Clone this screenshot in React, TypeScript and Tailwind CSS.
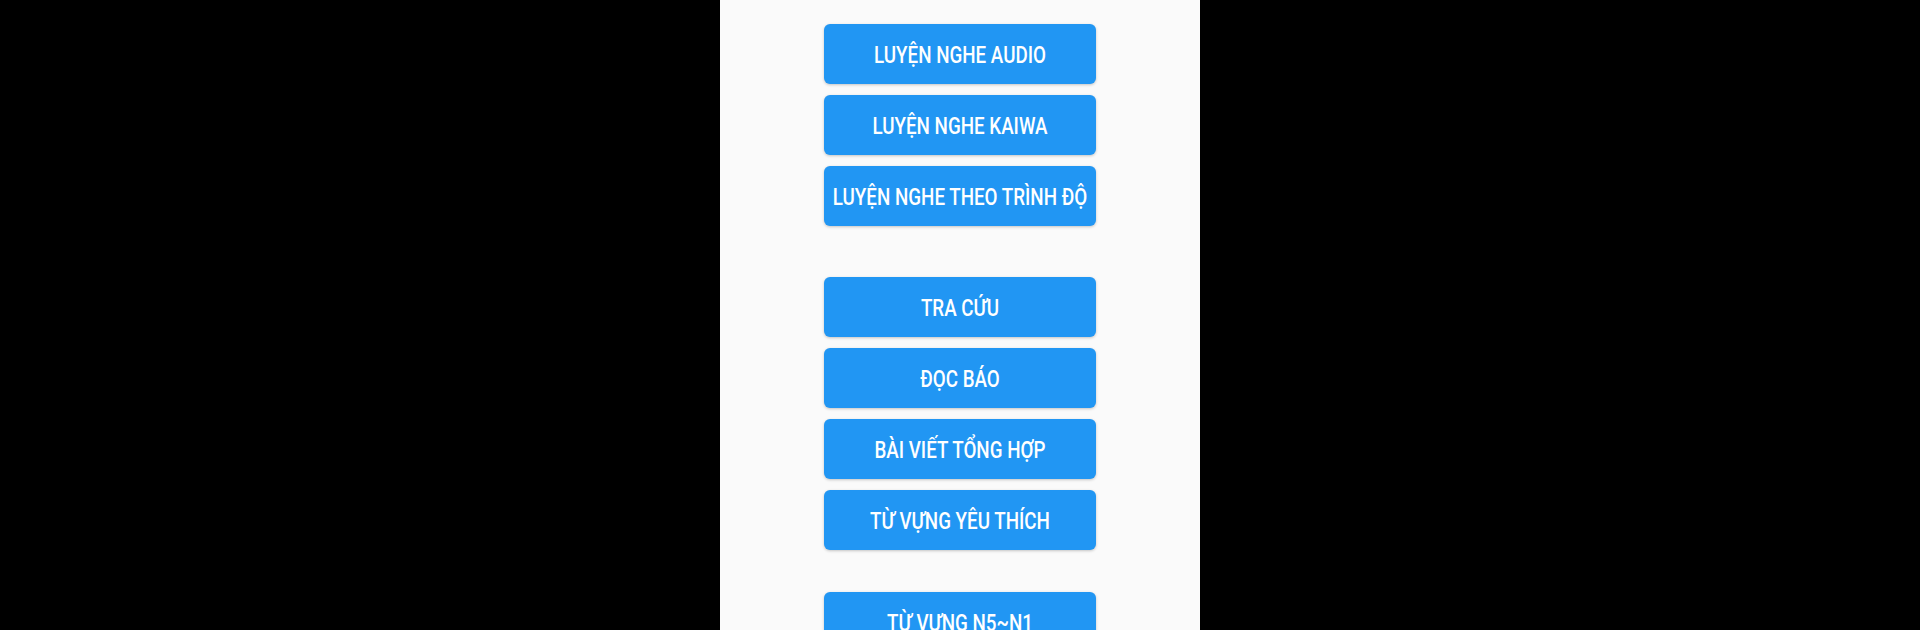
import * as React from "react";

type MenuButtonProps = {
  label: string;
  className?: string;
};

const MenuButton: React.FC<MenuButtonProps> = ({ label, className }) => (
  <button
    className={`flex h-[60px] w-[272px] shrink-0 items-center justify-center rounded-[6px] bg-[#2196f3] pt-[2px] shadow-[0_1px_3px_rgba(0,0,0,0.22)] ${className ?? ""}`}
  >
    <span className="inline-block scale-y-[1.32] whitespace-nowrap font-['Roboto',sans-serif] text-[18.8px] font-medium text-white">
      {label}
    </span>
  </button>
);

export default function App() {
  return (
    <div className="flex h-[630px] w-full justify-center overflow-hidden bg-black">
      <div className="flex h-full w-[480px] flex-col items-center bg-[#fafafa] pt-[24px]">
        {/* listening */}
        <MenuButton label="LUYỆN NGHE AUDIO" />
        <MenuButton label="LUYỆN NGHE KAIWA" className="mt-[11px]" />
        <MenuButton label="LUYỆN NGHE THEO TRÌNH ĐỘ" className="mt-[11px]" />

        {/* tools */}
        <MenuButton label="TRA CỨU" className="mt-[51px]" />
        <MenuButton label="ĐỌC BÁO" className="mt-[11px]" />
        <MenuButton label="BÀI VIẾT TỔNG HỢP" className="mt-[11px]" />
        <MenuButton label="TỪ VỰNG YÊU THÍCH" className="mt-[11px]" />

        {/* vocabulary */}
        <MenuButton label="TỪ VỰNG N5~N1" className="mt-[42px]" />
      </div>
    </div>
  );
}
